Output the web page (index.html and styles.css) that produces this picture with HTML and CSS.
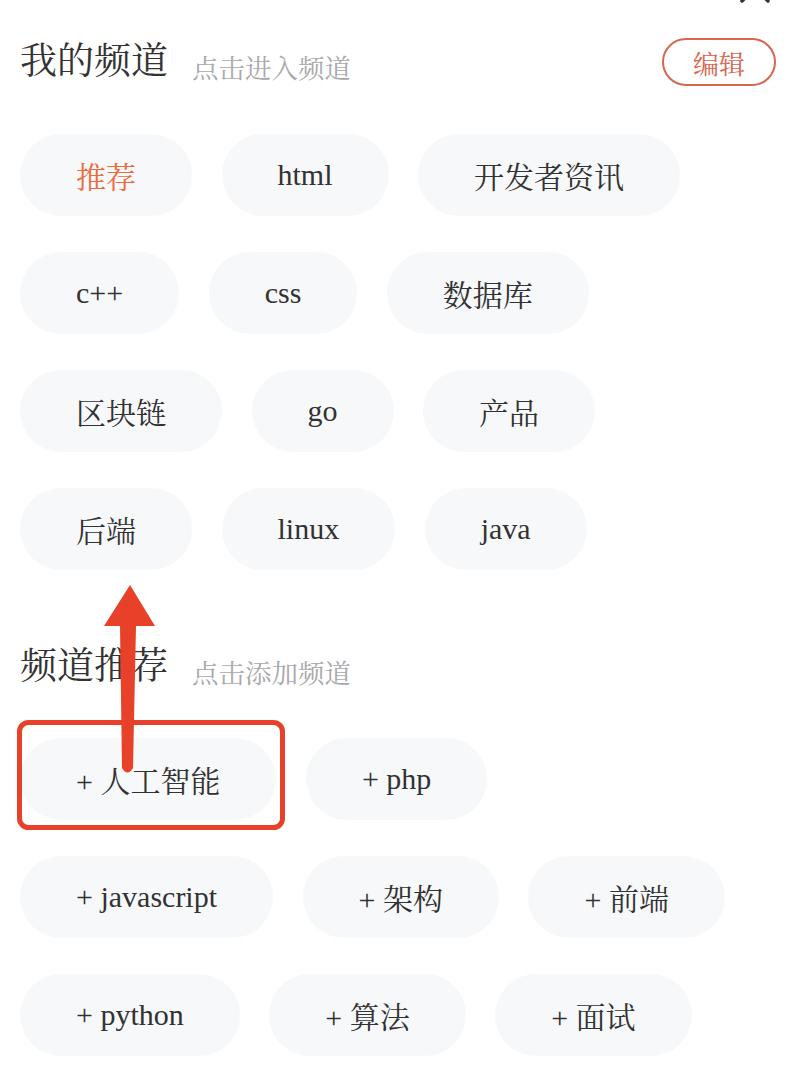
FILE: index.html
```html
<!DOCTYPE html>
<html lang="zh-CN">
<head>
<meta charset="utf-8">
<title>频道管理</title>
<link rel="stylesheet" href="styles.css">
</head>
<body>
<div class="page">
  <section class="section">
    <div class="head">
      <span class="title">我的频道</span>
      <span class="sub">点击进入频道</span>
      <button class="edit">编辑</button>
    </div>
    <div class="chips">
      <span class="chip active">推荐</span>
      <span class="chip">html</span>
      <span class="chip">开发者资讯</span>
      <span class="chip">c++</span>
      <span class="chip">css</span>
      <span class="chip">数据库</span>
      <span class="chip">区块链</span>
      <span class="chip">go</span>
      <span class="chip">产品</span>
      <span class="chip">后端</span>
      <span class="chip">linux</span>
      <span class="chip">java</span>
    </div>
  </section>
  <section class="section second">
    <div class="head">
      <span class="title">频道推荐</span>
      <span class="sub">点击添加频道</span>
    </div>
    <div class="chips">
      <span class="chip">+ 人工智能</span>
      <span class="chip">+ php</span>
      <span class="chip">+ javascript</span>
      <span class="chip">+ 架构</span>
      <span class="chip">+ 前端</span>
      <span class="chip">+ python</span>
      <span class="chip">+ 算法</span>
      <span class="chip">+ 面试</span>
    </div>
  </section>
</div>
<svg class="overlay" width="790" height="1088" viewBox="0 0 790 1088">
  <line x1="742" y1="1" x2="770" y2="-27" stroke="#333" stroke-width="3.5" stroke-linecap="round"/>
  <line x1="768" y1="1" x2="740" y2="-27" stroke="#333" stroke-width="3.5" stroke-linecap="round"/>
  <rect x="19.5" y="722.5" width="263" height="105" rx="9" fill="none" stroke="#e8412a" stroke-width="5"/>
  <path d="M130 585 L155 626 L136 626 L133 768 Q127.5 777 122 768 L120 626 L104 626 Z" fill="#e8412a"/>
</svg>
</body>
</html>
```
FILE: styles.css
```css
html, body {
  margin: 0;
  padding: 0;
  background: #ffffff;
}
body {
  position: relative;
  width: 790px;
  min-height: 1088px;
  overflow: hidden;
  font-family: "Liberation Serif", "Noto Serif CJK SC", "Noto Sans CJK SC", serif;
}
.page {
  padding: 38px 14px 0 20px;
}
.head {
  display: flex;
  align-items: center;
  height: 48px;
}
.title {
  font-size: 37px;
  color: #333333;
  line-height: 48px;
}
.sub {
  font-size: 26.5px;
  color: #a8a8ab;
  margin-left: 24px;
  margin-top: 8px;
}
.edit {
  margin-left: auto;
  height: 48px;
  padding: 0 29px;
  border: 2px solid #d9654f;
  border-radius: 24px;
  background: #fff;
  color: #d9654f;
  font-size: 26px;
  font-family: "Liberation Serif", "Noto Serif CJK SC", "Noto Sans CJK SC", serif;
}
.chips {
  display: flex;
  flex-wrap: wrap;
  column-gap: 29.5px;
  row-gap: 36px;
  margin-top: 48px;
  margin-right: 36px;
}
.chip {
  display: flex;
  align-items: center;
  justify-content: center;
  height: 82px;
  padding: 0 56px;
  border-radius: 41px;
  background: #f7f8fa;
  color: #323233;
  font-size: 30px;
}
.chip.active {
  color: #ee6a3a;
}
.second {
  margin-top: 73px;
}
.second .chips {
  margin-top: 47px;
}
.overlay {
  position: absolute;
  left: 0;
  top: 0;
  pointer-events: none;
}
```
